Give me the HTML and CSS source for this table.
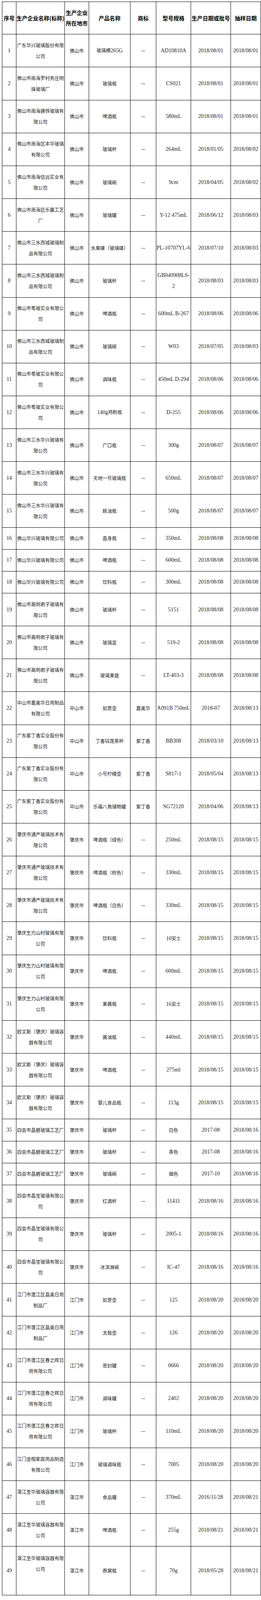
FILE: index.html
```html
<!DOCTYPE html>
<html lang="zh-CN">
<head>
<meta charset="utf-8">
<title>抽样产品信息</title>
<link rel="stylesheet" href="styles.css">
</head>
<body>
<table class="grid">
  <colgroup>
    <col class="c1"><col class="c2"><col class="c3"><col class="c4"><col class="c5"><col class="c6"><col class="c7"><col class="c8">
  </colgroup>
  <thead>
    <tr class="head">
      <th>序号</th>
      <th class="nw">生产企业名称(标称)</th>
      <th>生产企业所在地市</th>
      <th>产品名称</th>
      <th>商标</th>
      <th>型号规格</th>
      <th>生产日期或批号</th>
      <th>抽样日期</th>
    </tr>
  </thead>
  <tbody>
    <tr class="r2"><td class="t">1</td><td>广东华兴玻璃股份有限公司</td><td>佛山市</td><td>玻璃樽<span class="t">265G</span></td><td class="t">--</td><td class="t">AD10810A</td><td class="t">2018/08/01</td><td class="t">2018/08/01</td></tr>
    <tr class="r2"><td class="t">2</td><td>佛山市南海罗村务庄明珠玻璃厂</td><td>佛山市</td><td>玻璃瓶</td><td class="t">--</td><td class="t">CS021</td><td class="t">2018/08/01</td><td class="t">2018/08/01</td></tr>
    <tr class="r2"><td class="t">3</td><td>佛山市南海建铧玻璃有限公司</td><td>佛山市</td><td>啤酒瓶</td><td class="t">--</td><td class="t">580mL</td><td class="t">2018/08/01</td><td class="t">2018/08/01</td></tr>
    <tr class="r2"><td class="t">4</td><td>佛山市南海区丰华玻璃有限公司</td><td>佛山市</td><td>玻璃杯</td><td class="t">--</td><td class="t">264mL</td><td class="t">2018/01/05</td><td class="t">2018/08/02</td></tr>
    <tr class="r2"><td class="t">5</td><td>佛山市南海信远实业有限公司</td><td>佛山市</td><td>玻璃碗</td><td class="t">--</td><td class="t">9cm</td><td class="t">2018/04/05</td><td class="t">2018/08/02</td></tr>
    <tr class="r2"><td class="t">6</td><td>佛山市南海区乐赢工艺厂</td><td>佛山市</td><td>玻璃罐</td><td class="t">--</td><td class="t">Y-12 475mL</td><td class="t">2018/06/12</td><td class="t">2018/08/03</td></tr>
    <tr class="r2"><td class="t">7</td><td>佛山市三水西城玻璃制品有限公司</td><td>佛山市</td><td>水果碟（玻璃碟）</td><td class="t">--</td><td class="t nw">PL-10707YL-6</td><td class="t">2018/07/10</td><td class="t">2018/08/03</td></tr>
    <tr class="r2"><td class="t">8</td><td>佛山市三水西城玻璃制品有限公司</td><td>佛山市</td><td>玻璃杯</td><td class="t">--</td><td class="t">GB040908LS-<br>2</td><td class="t">2018/08/03</td><td class="t">2018/08/03</td></tr>
    <tr class="r2"><td class="t">9</td><td>佛山市粤玻实业有限公司</td><td>佛山市</td><td>啤酒瓶</td><td class="t">--</td><td class="t nw">600mL B-267</td><td class="t">2018/08/06</td><td class="t">2018/08/06</td></tr>
    <tr class="r2"><td class="t">10</td><td>佛山市三水西城玻璃制品有限公司</td><td>佛山市</td><td>玻璃碗</td><td class="t">--</td><td class="t">W03</td><td class="t">2018/07/05</td><td class="t">2018/08/03</td></tr>
    <tr class="r2"><td class="t">11</td><td>佛山市粤玻实业有限公司</td><td>佛山市</td><td>调味瓶</td><td class="t">--</td><td class="t nw">450mL D-294</td><td class="t">2018/08/06</td><td class="t">2018/08/06</td></tr>
    <tr class="r2"><td class="t">12</td><td>佛山市粤玻实业有限公司</td><td>佛山市</td><td><span class="t">140g</span>鸡粉瓶</td><td class="t">--</td><td class="t">D-255</td><td class="t">2018/08/06</td><td class="t">2018/08/06</td></tr>
    <tr class="r2"><td class="t">13</td><td>佛山市三水华兴玻璃有限公司</td><td>佛山市</td><td>广口瓶</td><td class="t">--</td><td class="t">300g</td><td class="t">2018/08/07</td><td class="t">2018/08/07</td></tr>
    <tr class="r2"><td class="t">14</td><td>佛山市三水华兴玻璃有限公司</td><td>佛山市</td><td>天地一号玻璃瓶</td><td class="t">--</td><td class="t">650mL</td><td class="t">2018/08/07</td><td class="t">2018/08/07</td></tr>
    <tr class="r2"><td class="t">15</td><td>佛山市三水华兴玻璃有限公司</td><td>佛山市</td><td>蚝油瓶</td><td class="t">--</td><td class="t">500g</td><td class="t">2018/08/07</td><td class="t">2018/08/07</td></tr>
    <tr class="r1"><td class="t">16</td><td>佛山华兴玻璃有限公司</td><td>佛山市</td><td>直身瓶</td><td class="t">--</td><td class="t">350mL</td><td class="t">2018/08/08</td><td class="t">2018/08/08</td></tr>
    <tr class="r1"><td class="t">17</td><td>佛山华兴玻璃有限公司</td><td>佛山市</td><td>啤酒瓶</td><td class="t">--</td><td class="t">600mL</td><td class="t">2018/08/08</td><td class="t">2018/08/08</td></tr>
    <tr class="r1"><td class="t">18</td><td>佛山华兴玻璃有限公司</td><td>佛山市</td><td>饮料瓶</td><td class="t">--</td><td class="t">300mL</td><td class="t">2018/08/08</td><td class="t">2018/08/08</td></tr>
    <tr class="r2"><td class="t">19</td><td>佛山市高明君子玻璃有限公司</td><td>佛山市</td><td>玻璃杯</td><td class="t">--</td><td class="t">5151</td><td class="t">2018/08/08</td><td class="t">2018/08/08</td></tr>
    <tr class="r2"><td class="t">20</td><td>佛山市高明君子玻璃有限公司</td><td>佛山市</td><td>玻璃盅</td><td class="t">--</td><td class="t">510-2</td><td class="t">2018/08/08</td><td class="t">2018/08/08</td></tr>
    <tr class="r2"><td class="t">21</td><td>佛山市高明君子玻璃有限公司</td><td>佛山市</td><td>玻璃果盘</td><td class="t">--</td><td class="t">LT-403-3</td><td class="t">2018/08/08</td><td class="t">2018/08/08</td></tr>
    <tr class="r2"><td class="t">22</td><td>中山市嘉美华日用制品有限公司</td><td>中山市</td><td>如意壶</td><td>嘉美华</td><td class="t nw">A091B 750mL</td><td class="t">2018-07</td><td class="t">2018/08/13</td></tr>
    <tr class="r2"><td class="t">23</td><td>广东紫丁香实业股份有限公司</td><td>中山市</td><td>丁香钰莲茶杯</td><td>紫丁香</td><td class="t">BB308</td><td class="t">2018/03/10</td><td class="t">2018/08/13</td></tr>
    <tr class="r2"><td class="t">24</td><td>广东紫丁香实业股份有限公司</td><td>中山市</td><td>小号柠檬壶</td><td>紫丁香</td><td class="t">S817-1</td><td class="t">2018/05/04</td><td class="t">2018/08/13</td></tr>
    <tr class="r2"><td class="t">25</td><td>广东紫丁香实业股份有限公司</td><td>中山市</td><td>乐福八角储物罐</td><td>紫丁香</td><td class="t">SG72120</td><td class="t">2018/04/06</td><td class="t">2018/08/13</td></tr>
    <tr class="r2"><td class="t">26</td><td>肇庆市通产玻璃技术有限公司</td><td>肇庆市</td><td>啤酒瓶（绿色）</td><td class="t">--</td><td class="t">250mL</td><td class="t">2018/08/15</td><td class="t">2018/08/15</td></tr>
    <tr class="r2"><td class="t">27</td><td>肇庆市通产玻璃技术有限公司</td><td>肇庆市</td><td>啤酒瓶（棕色）</td><td class="t">--</td><td class="t">330mL</td><td class="t">2018/08/15</td><td class="t">2018/08/15</td></tr>
    <tr class="r2"><td class="t">28</td><td>肇庆市通产玻璃技术有限公司</td><td>肇庆市</td><td>啤酒瓶（白色）</td><td class="t">--</td><td class="t">330mL</td><td class="t">2018/08/15</td><td class="t">2018/08/15</td></tr>
    <tr class="r2"><td class="t">29</td><td>肇庆生力山村玻璃有限公司</td><td>肇庆市</td><td>饮料瓶</td><td class="t">--</td><td><span class="t">10</span>安士</td><td class="t">2018/08/15</td><td class="t">2018/08/15</td></tr>
    <tr class="r2"><td class="t">30</td><td>肇庆生力山村玻璃有限公司</td><td>肇庆市</td><td>啤酒瓶</td><td class="t">--</td><td class="t">600mL</td><td class="t">2018/08/15</td><td class="t">2018/08/15</td></tr>
    <tr class="r2"><td class="t">31</td><td>肇庆生力山村玻璃有限公司</td><td>肇庆市</td><td>果酱瓶</td><td class="t">--</td><td><span class="t">16</span>安士</td><td class="t">2018/08/15</td><td class="t">2018/08/15</td></tr>
    <tr class="r2"><td class="t">32</td><td>欧文斯（肇庆）玻璃容器有限公司</td><td>肇庆市</td><td>酱油瓶</td><td class="t">--</td><td class="t">440mL</td><td class="t">2018/08/15</td><td class="t">2018/08/15</td></tr>
    <tr class="r2"><td class="t">33</td><td>欧文斯（肇庆）玻璃容器有限公司</td><td>肇庆市</td><td>啤酒瓶</td><td class="t">--</td><td class="t">275ml</td><td class="t">2018/08/15</td><td class="t">2018/08/15</td></tr>
    <tr class="r2"><td class="t">34</td><td>欧文斯（肇庆）玻璃容器有限公司</td><td>肇庆市</td><td>婴儿食品瓶</td><td class="t">--</td><td class="t">113g</td><td class="t">2018/08/15</td><td class="t">2018/08/15</td></tr>
    <tr class="r1"><td class="t">35</td><td>四会市晶碧玻璃工艺厂</td><td>肇庆市</td><td>玻璃杯</td><td class="t">--</td><td>白色</td><td class="t">2017-08</td><td class="t">2018/08/16</td></tr>
    <tr class="r1"><td class="t">36</td><td>四会市晶碧玻璃工艺厂</td><td>肇庆市</td><td>玻璃杯</td><td class="t">--</td><td>茶色</td><td class="t">2017-08</td><td class="t">2018/08/16</td></tr>
    <tr class="r1"><td class="t">37</td><td>四会市晶碧玻璃工艺厂</td><td>肇庆市</td><td>玻璃碗</td><td class="t">--</td><td>烟色</td><td class="t">2017-10</td><td class="t">2018/08/16</td></tr>
    <tr class="r2"><td class="t">38</td><td>四会市晶宝玻璃有限公司</td><td>肇庆市</td><td>红酒杯</td><td class="t">--</td><td class="t">11411</td><td class="t">2018/08/16</td><td class="t">2018/08/16</td></tr>
    <tr class="r2"><td class="t">39</td><td>四会市晶宝玻璃有限公司</td><td>肇庆市</td><td>玻璃杯</td><td class="t">--</td><td class="t">2005-1</td><td class="t">2018/08/16</td><td class="t">2018/08/16</td></tr>
    <tr class="r2"><td class="t">40</td><td>四会市晶宝玻璃有限公司</td><td>肇庆市</td><td>冰淇淋碗</td><td class="t">--</td><td class="t">IC-47</td><td class="t">2018/08/16</td><td class="t">2018/08/16</td></tr>
    <tr class="r2"><td class="t">41</td><td>江门市蓬江区晶美日用制品厂</td><td>江门市</td><td>如意壶</td><td class="t">--</td><td class="t">125</td><td class="t">2018/08/20</td><td class="t">2018/08/20</td></tr>
    <tr class="r2"><td class="t">42</td><td>江门市蓬江区晶美日用制品厂</td><td>江门市</td><td>太极壶</td><td class="t">--</td><td class="t">126</td><td class="t">2018/08/20</td><td class="t">2018/08/20</td></tr>
    <tr class="r2"><td class="t">43</td><td>江门市蓬江区春之晖日用有限公司</td><td>江门市</td><td>密封罐</td><td class="t">--</td><td class="t">0666</td><td class="t">2018/08/20</td><td class="t">2018/08/20</td></tr>
    <tr class="r2"><td class="t">44</td><td>江门市蓬江区春之晖日用有限公司</td><td>江门市</td><td>调味罐</td><td class="t">--</td><td class="t">2402</td><td class="t">2018/08/20</td><td class="t">2018/08/20</td></tr>
    <tr class="r2"><td class="t">45</td><td>江门市蓬江区春之晖日用有限公司</td><td>江门市</td><td>玻璃杯</td><td class="t">--</td><td class="t">110mL</td><td class="t">2018/08/20</td><td class="t">2018/08/20</td></tr>
    <tr class="r2"><td class="t">46</td><td>江门金榕家庭用品制造有限公司</td><td>江门市</td><td>玻璃调味瓶</td><td class="t">--</td><td class="t">7005</td><td class="t">2018/08/20</td><td class="t">2018/08/20</td></tr>
    <tr class="r2"><td class="t">47</td><td>湛江圣华玻璃容器有限公司</td><td>湛江市</td><td>食品罐</td><td class="t">--</td><td class="t">370mL</td><td class="t">2016/11/28</td><td class="t">2018/08/21</td></tr>
    <tr class="r2"><td class="t">48</td><td>湛江圣华玻璃容器有限公司</td><td>湛江市</td><td>啤酒瓶</td><td class="t">--</td><td class="t">255g</td><td class="t">2018/08/21</td><td class="t">2018/08/21</td></tr>
    <tr class="r3"><td class="t">49</td><td class="up">湛江圣华玻璃容器有限公司</td><td>湛江市</td><td>燕窝瓶</td><td class="t">--</td><td class="t">70g</td><td class="t">2018/05/28</td><td class="t">2018/08/21</td></tr>
  </tbody>
</table>
</body>
</html>
```

FILE: styles.css
```css
html, body {
  margin: 0;
  padding: 0;
  background: #ffffff;
}

body {
  padding: 4px 0 0 5px;
}

.grid {
  border-collapse: collapse;
  table-layout: fixed;
  width: 662px;
  color: #1a1a1a;
}

.c1 { width: 36px; }
.c2 { width: 124px; }
.c3 { width: 62px; }
.c4 { width: 106px; }
.c5 { width: 66px; }
.c6 { width: 89px; }
.c7 { width: 102px; }
.c8 { width: 77px; }

.grid th,
.grid td {
  border: 1px solid #000000;
  padding: 0;
  text-align: center;
  vertical-align: middle;
  overflow: hidden;
}

.grid th {
  font-family: "Noto Sans CJK SC", sans-serif;
  font-size: 14px;
  font-weight: 700;
  line-height: 27px;
  color: #000000;
}

.grid td {
  font-family: "Noto Sans CJK SC", sans-serif;
  font-size: 12px;
  line-height: 28px;
}

.grid .t {
  font-family: "Liberation Serif", "Noto Sans CJK SC", serif;
  font-size: 14px;
}

.nw {
  white-space: nowrap;
}

/* row heights: one-line, two-line and tall rows */
.head { height: 83.3px; }
.r2 { height: 84.16px; }
.r1 { height: 56.1px; }
.r3 { height: 124.97px; }

.grid td.up {
  padding-bottom: 37px;
}
```
